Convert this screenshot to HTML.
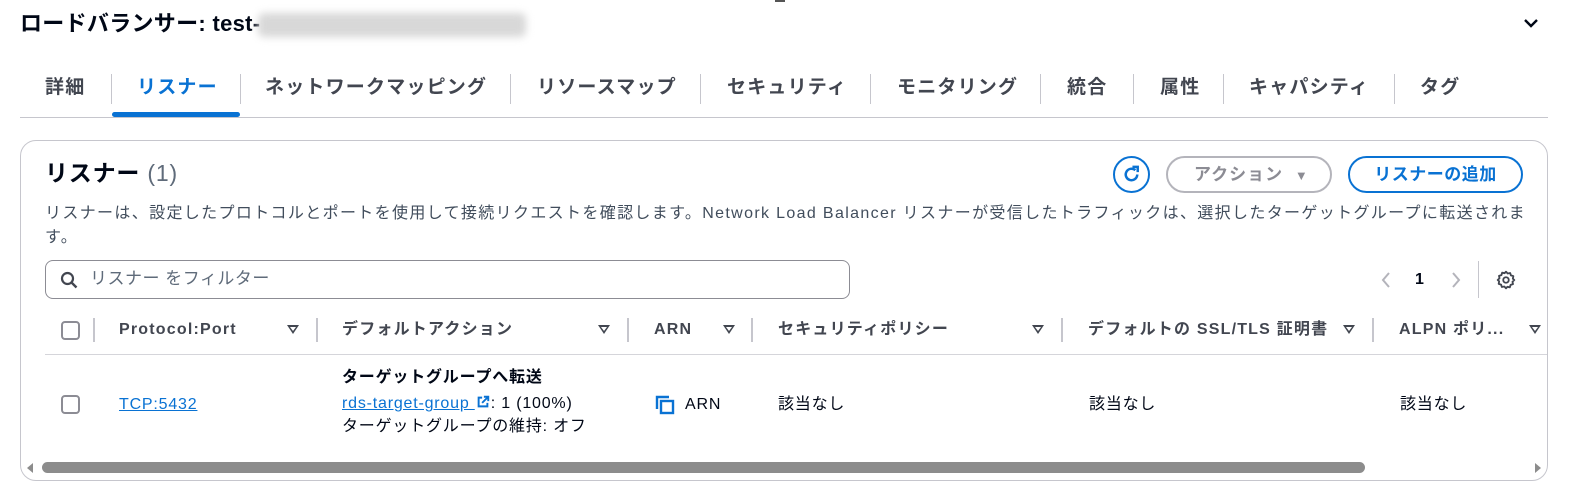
<!DOCTYPE html>
<html><head><meta charset="utf-8"><style>
*{margin:0;padding:0;box-sizing:border-box}
body{width:1577px;height:500px;background:#fff;position:relative;overflow:hidden;font-family:"Liberation Sans","Noto Sans CJK JP",sans-serif;color:#000716}
.a{position:absolute;white-space:nowrap}
.tab{position:absolute;top:74px;font-size:19px;letter-spacing:1.2px;font-weight:bold;color:#424650;line-height:28px}
.sep{position:absolute;top:74px;width:1px;height:30px;background:#c6c6cd}
.th{position:absolute;top:318px;font-size:16px;letter-spacing:1.2px;font-weight:bold;color:#424650;line-height:24px}
.tri{position:absolute;top:325px;width:0;height:0;border-left:6px solid transparent;border-right:6px solid transparent;border-top:9px solid #424650}
.tri:after{content:"";position:absolute;left:-3px;top:-7px;border-left:3px solid transparent;border-right:3px solid transparent;border-top:4px solid #fff}
.hs{position:absolute;top:318px;width:2px;height:24px;background:#c6c6cd}
.td{position:absolute;font-size:16px;letter-spacing:0.8px;line-height:23px;color:#000716}
.cb{position:absolute;width:19px;height:19px;border:2px solid #8c8c94;border-radius:4px}
</style></head><body>
<div class="a" style="left:20px;top:9px;font-size:22px;letter-spacing:0.3px;font-weight:bold;line-height:30px">ロードバランサー: test-</div>
<div class="a" style="left:258px;top:13px;width:268px;height:24px;background:#d8d8d8;filter:blur(4px);border-radius:6px"></div>
<div class="a" style="left:775px;top:0;width:10px;height:2px;background:#555"></div>
<svg class="a" style="left:1522px;top:16px" width="18" height="14" viewBox="0 0 18 14"><path d="M3 4l6 6 6-6" fill="none" stroke="#000716" stroke-width="2.4"/></svg>

<div class="tab" style="left:45px">詳細</div>
<div class="sep" style="left:111px"></div>
<div class="tab" style="left:137px;color:#0972d3">リスナー</div>
<div class="sep" style="left:240px"></div>
<div class="tab" style="left:265px">ネットワークマッピング</div>
<div class="sep" style="left:510px"></div>
<div class="tab" style="left:537px">リソースマップ</div>
<div class="sep" style="left:700px"></div>
<div class="tab" style="left:727px">セキュリティ</div>
<div class="sep" style="left:870px"></div>
<div class="tab" style="left:897px">モニタリング</div>
<div class="sep" style="left:1040px"></div>
<div class="tab" style="left:1067px">統合</div>
<div class="sep" style="left:1133px"></div>
<div class="tab" style="left:1160px">属性</div>
<div class="sep" style="left:1223px"></div>
<div class="tab" style="left:1249px">キャパシティ</div>
<div class="sep" style="left:1394px"></div>
<div class="tab" style="left:1420px">タグ</div>
<div class="a" style="left:20px;top:117px;width:1528px;height:1px;background:#c6c6cd"></div>
<div class="a" style="left:112px;top:112px;width:128px;height:5px;background:#0972d3;border-radius:3px"></div>

<div class="a" style="left:20px;top:140px;width:1528px;height:341px;border:1px solid #c6c6cd;border-radius:16px"></div>
<div class="a" style="left:45px;top:158px;font-size:23px;letter-spacing:0.8px;font-weight:bold;line-height:30px">リスナー <span style="font-weight:normal;color:#5f6b7a">(1)</span></div>
<div class="a" style="left:45px;top:202px;font-size:16px;letter-spacing:1.35px;line-height:24px;color:#414d5c">リスナーは、設定したプロトコルとポートを使用して接続リクエストを確認します。Network Load Balancer リスナーが受信したトラフィックは、選択したターゲットグループに転送されま<br>す。</div>

<div class="a" style="left:1113px;top:156px;width:37px;height:37px;border:2px solid #0972d3;border-radius:50%"></div>
<svg class="a" style="left:1120px;top:163px" width="23" height="23" viewBox="0 0 24 24"><path d="M18 12a6 6 0 1 1-2-4.5" fill="none" stroke="#0972d3" stroke-width="2.6"/><path d="M13 4h5.5v5.5" fill="none" stroke="#0972d3" stroke-width="2.6"/></svg>
<div class="a" style="left:1166px;top:156px;width:166px;height:37px;border:2px solid #b4b4bb;border-radius:20px;color:#8c8c94;font-size:17px;letter-spacing:1px;font-weight:bold;line-height:33px;padding-left:26px">アクション <span style="font-size:13px;margin-left:6px">▼</span></div>
<div class="a" style="left:1348px;top:156px;width:175px;height:37px;border:2px solid #0972d3;border-radius:20px;color:#0972d3;font-size:17px;letter-spacing:0.5px;font-weight:bold;line-height:33px;text-align:center">リスナーの追加</div>

<div class="a" style="left:45px;top:260px;width:805px;height:39px;border:1px solid #8c8c94;border-radius:8px"></div>
<svg class="a" style="left:60px;top:271px" width="18" height="18" viewBox="0 0 18 18"><circle cx="7.5" cy="7.5" r="5.5" fill="none" stroke="#424650" stroke-width="2.2"/><path d="M11.5 11.5l5 5" stroke="#424650" stroke-width="2.4"/></svg>
<div class="a" style="left:90px;top:268px;font-size:17px;letter-spacing:0.5px;color:#5f6b7a;line-height:22px">リスナー をフィルター</div>

<svg class="a" style="left:1380px;top:271px" width="12" height="18" viewBox="0 0 12 18"><path d="M9 2L3 9l6 7" fill="none" stroke="#b4b4bb" stroke-width="2"/></svg>
<div class="a" style="left:1415px;top:268px;font-size:16px;font-weight:bold;line-height:24px">1</div>
<svg class="a" style="left:1450px;top:271px" width="12" height="18" viewBox="0 0 12 18"><path d="M3 2l6 7-6 7" fill="none" stroke="#b4b4bb" stroke-width="2"/></svg>
<div class="a" style="left:1478px;top:261px;width:1px;height:37px;background:#c6c6cd"></div>
<svg class="a" style="left:1496px;top:270px" width="20" height="20" viewBox="0 0 24 24"><path d="M12 2l2 2.2 3-.6.9 2.9 2.9.9-.6 3L22 12l-2.2 2 .6 3-2.9.9-.9 2.9-3-.6L12 22l-2-2.2-3 .6-.9-2.9-2.9-.9.6-3L2 12l2.2-2-.6-3 2.9-.9.9-2.9 3 .6z" fill="none" stroke="#424650" stroke-width="2.2" stroke-linejoin="round"/><circle cx="12" cy="12" r="3.3" fill="none" stroke="#424650" stroke-width="2.2"/></svg>

<div class="cb" style="left:61px;top:321px"></div>
<div class="hs" style="left:93px"></div>
<div class="th" style="left:119px">Protocol:Port</div><div class="tri" style="left:287px"></div><div class="hs" style="left:316px"></div>
<div class="th" style="left:342px">デフォルトアクション</div><div class="tri" style="left:598px"></div><div class="hs" style="left:627px"></div>
<div class="th" style="left:654px">ARN</div><div class="tri" style="left:723px"></div><div class="hs" style="left:751px"></div>
<div class="th" style="left:778px">セキュリティポリシー</div><div class="tri" style="left:1032px"></div><div class="hs" style="left:1061px"></div>
<div class="th" style="left:1088px">デフォルトの SSL/TLS 証明書</div><div class="tri" style="left:1343px"></div><div class="hs" style="left:1372px"></div>
<div class="th" style="left:1399px">ALPN ポリ...</div><div class="tri" style="left:1529px"></div>
<div class="a" style="left:45px;top:354px;width:1502px;height:1px;background:#d5d5da"></div>

<div class="cb" style="left:61px;top:395px"></div>
<div class="td" style="left:119px;top:393px;color:#0972d3;text-decoration:underline">TCP:5432</div>
<div class="td" style="left:342px;top:366px;font-weight:bold">ターゲットグループへ転送</div>
<div class="td" style="left:342px;top:392px"><span style="color:#0972d3;text-decoration:underline">rds-target-group </span><svg width="16" height="14" viewBox="0 0 16 16" style="vertical-align:-1px"><path d="M7 3H3v10h10V9" fill="none" stroke="#0972d3" stroke-width="2.2"/><path d="M9 2h5v5M14 2L7 9" fill="none" stroke="#0972d3" stroke-width="2.2"/></svg>: 1 (100%)</div>
<div class="td" style="left:342px;top:415px">ターゲットグループの維持: オフ</div>
<svg class="a" style="left:655px;top:395px" width="22" height="20" viewBox="0 0 22 20"><path d="M2 14V2h12" fill="none" stroke="#0972d3" stroke-width="2.4"/><rect x="6" y="6" width="12" height="12" fill="none" stroke="#0972d3" stroke-width="2.4"/></svg>
<div class="td" style="left:685px;top:393px">ARN</div>
<div class="td" style="left:778px;top:393px">該当なし</div>
<div class="td" style="left:1089px;top:393px">該当なし</div>
<div class="td" style="left:1400px;top:393px">該当なし</div>

<div class="a" style="left:27px;top:463px;width:0;height:0;border-top:5px solid transparent;border-bottom:5px solid transparent;border-right:6px solid #8c8c8c"></div>
<div class="a" style="left:42px;top:462px;width:1323px;height:11px;background:#8c8c8c;border-radius:6px"></div>
<div class="a" style="left:1535px;top:463px;width:0;height:0;border-top:5px solid transparent;border-bottom:5px solid transparent;border-left:6px solid #8c8c8c"></div>
</body></html>
